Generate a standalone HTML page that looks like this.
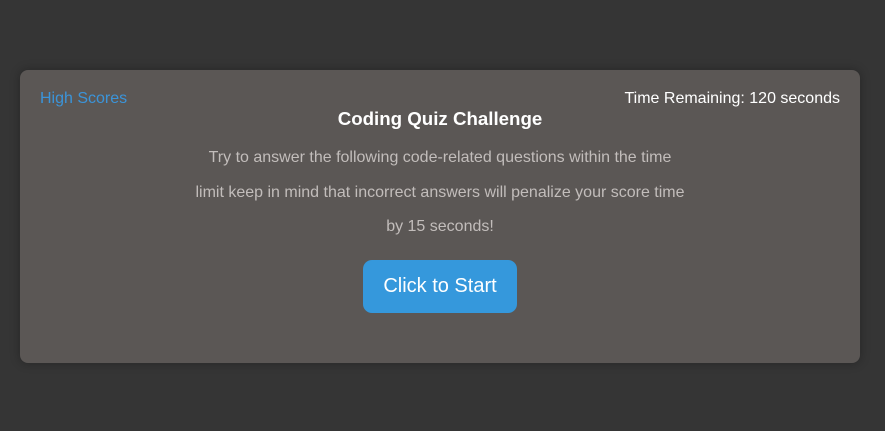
<!DOCTYPE html>
<html><head><style>
body{margin:0;background:#353535;width:885px;height:431px;overflow:hidden;font-family:"Liberation Sans",Arial,sans-serif;}
.card{position:absolute;left:20px;top:70px;width:840px;height:293px;background:#5b5755;border-radius:8px;box-shadow:0 0 10px rgba(0,0,0,0.3);}
.hs{position:absolute;left:20px;top:20px;color:#3b94d9;font-size:16px;}
.tr{position:absolute;right:20px;top:20px;color:#fff;font-size:16px;}
h1{position:absolute;left:0;right:0;top:38px;margin:0;text-align:center;color:#fff;font-size:18.7px;font-weight:bold;}
.p{position:absolute;left:0;right:0;top:71px;text-align:center;color:#c2bdbb;font-size:16px;line-height:34.5px;}
.btn{position:absolute;left:343px;top:190px;width:154px;height:53px;background:#3598dc;border-radius:9px;color:#fff;font-size:20px;text-align:center;line-height:53px;}
</style></head><body>
<div class="card">
<div class="hs">High Scores</div>
<div class="tr">Time Remaining: 120 seconds</div>
<h1>Coding Quiz Challenge</h1>
<div class="p">Try to answer the following code-related questions within the time<br>limit keep in mind that incorrect answers will penalize your score time<br>by 15 seconds!</div>
<div class="btn">Click to Start</div>
</div>
</body></html>
